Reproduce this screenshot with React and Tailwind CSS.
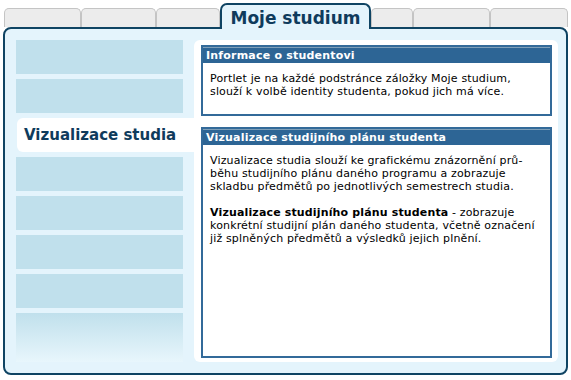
import React from "react";

const font = { fontFamily: '"DejaVu Sans", Verdana, sans-serif' };

function Tab({ w }) {
  return (
    <div
      className={`h-[19px] bg-[#ececec] border border-b-0 border-[#c4c4c4] rounded-t-[5px] ${w}`}
    />
  );
}

function MenuItem() {
  return <div className="h-[34px] w-[167px] bg-[#c0e0ec] shrink-0" />;
}

function Box({ title, children, grow }) {
  return (
    <div className={`border-2 border-[#336a99] bg-white flex flex-col ${grow ? "flex-1" : ""}`}>
      <div className="h-[16px] bg-[#2d6595] border-t border-[#7f9fb8] px-[3px] text-[11px] leading-[15px] font-bold text-white tracking-[0.2px]">
        {title}
      </div>
      <div className="px-[7px] pt-[9px] pb-[16px] text-[11px] leading-[13px] tracking-[0.15px] text-black whitespace-nowrap">
        {children}
      </div>
    </div>
  );
}

export default function App() {
  return (
    <div className="w-[571px] h-[380px] bg-white pt-[3px] px-[3px]" style={font}>
      <div className="flex items-end h-[24px] pl-[1px]">
        <Tab w="w-[77px]" />
        <Tab w="w-[75px]" />
        <Tab w="w-[64px]" />
        <div className="relative z-10 -mb-[2px] h-[26px] w-[151px] border-2 border-b-0 border-[#0f4463] rounded-t-[7px] bg-[#e4f4fc] flex items-center justify-center">
          <span className="text-[17px] font-bold text-[#0f3b5c] leading-none pt-[2px]">
            Moje studium
          </span>
        </div>
        <Tab w="w-[42px]" />
        <Tab w="w-[77px]" />
        <Tab w="w-[78px]" />
      </div>
      <div className="h-[348px] w-[565px] border-2 border-[#0f4463] rounded-[8px] bg-[#e4f4fc] pl-[11px] pt-[11px] pr-[8px] pb-[11px] flex">
        <div className="w-[167px] flex flex-col gap-[5px] shrink-0">
          <MenuItem />
          <MenuItem />
          <div className="relative z-10 h-[34px] w-[179px] ml-[1px] shrink-0 bg-white rounded-l-[6px] flex items-center pl-[7px]">
            <span className="text-[15px] font-bold text-[#0f3b5c] leading-none">
              Vizualizace studia
            </span>
          </div>
          <MenuItem />
          <MenuItem />
          <MenuItem />
          <MenuItem />
          <div className="flex-1 w-[167px] bg-gradient-to-b from-[#c0e0ec] to-[#e8f6fc]" />
        </div>
        <div className="ml-[11px] flex-1 bg-white rounded-[6px] pl-[7px] pr-[6px] pt-[5px] pb-[4px] flex flex-col gap-[11px]">
          <Box title="Informace o studentovi">
            Portlet je na každé podstránce záložky Moje studium,
            <br />
            slouží k volbě identity studenta, pokud jich má více.
          </Box>
          <Box title="Vizualizace studijního plánu studenta" grow>
            Vizualizace studia slouží ke grafickému znázornění prů-
            <br />
            běhu studijního plánu daného programu a zobrazuje
            <br />
            skladbu předmětů po jednotlivých semestrech studia.
            <br />
            <br />
            <b>Vizualizace studijního plánu studenta</b> - zobrazuje
            <br />
            konkrétní studijní plán daného studenta, včetně označení
            <br />
            již splněných předmětů a výsledků jejich plnění.
          </Box>
        </div>
      </div>
    </div>
  );
}
